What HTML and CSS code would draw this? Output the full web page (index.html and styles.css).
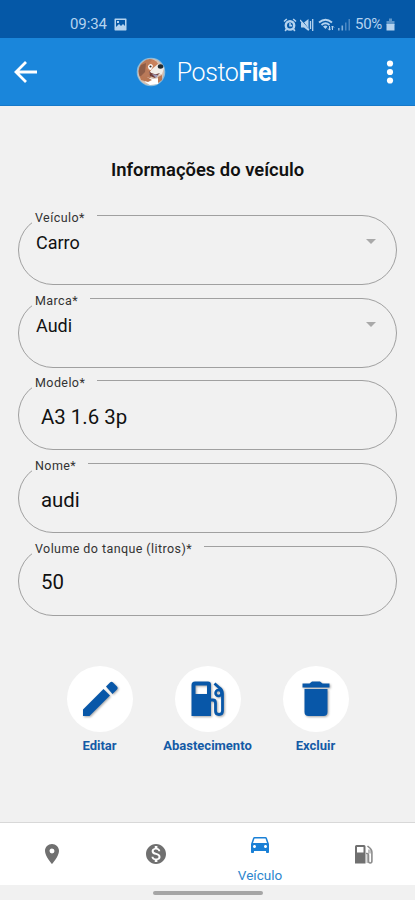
FILE: index.html
```html
<!DOCTYPE html>
<html lang="pt-BR">
<head>
    <meta charset="UTF-8">
    <meta name="viewport" content="width=device-width, initial-scale=1.0">
    <title>PostoFiel - Veículo</title>
    <link rel="stylesheet" href="styles.css">
</head>
<body>
    <div class="status-bar">
        <div class="status-left">
            <span class="clock">09:34</span>
            <svg width="13" height="13" viewBox="0 0 13 13">
                <path fill="currentColor" fill-rule="evenodd" d="M1 .5h11l.5.5v11l-.5.5H1L.5 12V1zM2 2v7l3-3 2 2 2-2 2 2V2zM3 3h2v2H3z"/>
            </svg>
        </div>
        <div class="status-right">
            <svg class="alarm" width="14" height="14" viewBox="0 0 14 14">
                <circle cx="7" cy="7.4" r="4.2" fill="none" stroke="currentColor" stroke-width="2.4"/>
                <path d="M7 5v2.6h2.2M1 3.5L3.8 1M13 3.5L10.2 1M3.5 11l-1.3 2M10.5 11l1.3 2" fill="none" stroke="currentColor" stroke-width="1.6"/>
            </svg>
            <svg class="mute" width="14" height="14" viewBox="0 0 14 14">
                <path d="M1 4.5h3L8.5 1v12L4 9.5H1z" fill="currentColor"/>
                <path d="M1 1l9 12" stroke="#0558a7" stroke-width="1"/>
                <path d="M0 2l9 10M10.5 3v8M12.7 1v12" fill="none" stroke="currentColor" stroke-width="1.3"/>
            </svg>
            <svg class="wifi" width="17" height="14" viewBox="0 0 17 14">
                <path d="M1 4.5Q7.500-1 14 4.500M3.500 7Q7.500 3.500 11.500 7" fill="none" stroke="currentColor" stroke-width="1.800"/>
                <path d="M5 8.500q2.500-2 4.500 0L7.500 11z" fill="currentColor"/>
                <path d="M11.500 8v4M10 10.500l1.500 1.700 1.500-1.700M14.500 12V8M13 9.500L14.500 8 16 9.500" fill="none" stroke="currentColor" stroke-width="1"/>
            </svg>
            <svg class="signal" width="13" height="13" viewBox="0 0 13 13">
                <path fill="currentColor" opacity=".7" d="M0 10h1.600v2.500H0zM3.500 7.500h1.600v5H3.500z"/>
                <path fill="currentColor" opacity=".4" d="M7 4.500h1.500v8H7zM10.500 1H12v11.500h-1.500z"/>
            </svg>
            <span class="battery-text">50%</span>
            <svg class="battery" width="9" height="13" viewBox="0 0 9 13">
                <path fill="currentColor" opacity=".5" d="M3 .5h3V3h2.500v4h-8V3H3z"/>
                <path fill="currentColor" d="M.5 6h8v6.500h-8z"/>
            </svg>
        </div>
    </div>

    <header class="app-bar">
        <svg class="back" width="24" height="24" viewBox="0 0 24 24">
            <path d="M12 2L2 12l10 10M2 12h21" fill="none" stroke="#fff" stroke-width="2.8"/>
        </svg>
        <div class="brand">
            <!-- Dog mascot -->
            <svg class="mascot" width="30" height="30" viewBox="0 0 30 30">
                <circle cx="15" cy="15" r="14.3" fill="#8ebbd8"/>
                <path d="M2 18C1 8 8 1 17 2c7 1 11 7 11 13s-5 13-13 13S3 23 2 18z" fill="#d7c0b1"/>
                <path d="M3 18Q1 9 7 5q5-5 11-2l5 7-7 6-3 9-8-3z" fill="#b97959"/>
                <path d="M16 3q5 0 7 6l-8 7-5-5z" fill="#c9825d"/>
                <path d="M5 8q-4 6-1 12l5-5 1-9z" fill="#8e5c47"/>
                <path d="M16 12l6-5 6 4-2 6-8 2-5-3z" fill="#f2eee9"/>
                <path d="M12 9q3-4 5 0l-2 4q-3 0-3-4z" fill="#fff"/>
                <circle cx="14.500" cy="9.500" r="1.100" fill="#38312f"/>
                <ellipse cx="24.500" cy="9.500" rx="2.700" ry="2.200" fill="#222b31"/>
                <path d="M13 14q4 5 11 2l-5 5-5-2z" fill="#713e39"/>
                <path d="M16 17l6 1-2 3z" fill="#9e9ab9"/>
                <path d="M10 20l7 2 7-1-2 6-8 1-5-3z" fill="#fff"/>
                <path d="M4 19l7 1 5 3-4 2-7-2zM22 20l4-2v5l-4 3z" fill="#b97754"/>
            </svg>
            <span class="brand-name">Posto<b>Fiel</b></span>
        </div>
        <svg class="more" width="8" height="24" viewBox="0 0 8 24">
            <g fill="#fff">
                <circle cx="4" cy="3.500" r="3.100"/>
                <circle cx="4" cy="12" r="3.100"/>
                <circle cx="4" cy="20.500" r="3.100"/>
            </g>
        </svg>
    </header>

    <main>
        <h1>Informações do veículo</h1>

        <div class="fields">
            <div class="field select">
                <span class="label">Veículo*</span>
                <span class="value">Carro</span>
                <span class="caret"></span>
            </div>
            <div class="field select">
                <span class="label">Marca*</span>
                <span class="value">Audi</span>
                <span class="caret"></span>
            </div>
            <div class="field">
                <span class="label">Modelo*</span>
                <span class="value">A3 1.6 3p</span>
            </div>
            <div class="field">
                <span class="label">Nome*</span>
                <span class="value">audi</span>
            </div>
            <div class="field">
                <span class="label">Volume do tanque (litros)*</span>
                <span class="value">50</span>
            </div>
        </div>

        <div class="actions">
            <div class="action">
                <div class="circle">
                    <svg width="36" height="36" viewBox="0 0 36 36">
                        <path d="M1 28.500L21.500 8l6.500 6.500L7.500 35H1zM24 5.500L28 1.500q1.500-1.300 3 0l4 4q1.300 1.500 0 3l-4.500 4.500z"/>
                    </svg>
                </div>
                <span>Editar</span>
            </div>
            <div class="action">
                <div class="circle">
                    <svg width="36" height="36" viewBox="0 0 36 36">
                        <path fill-rule="evenodd" d="M5 .5h13q3 0 3 3V35H1.500V4Q1.500.5 5 .5zM5.500 4.500V13h11.500V4.500z"/>
                        <path d="M21 19h2q2.500 0 2.500 3v8q0 3.500 3.500 3.500t3.500-3.500V13q0-4-3-6l-5-4.500" fill="none" stroke="#0857a8" stroke-width="2.800"/>
                        <circle cx="28.500" cy="12" r="3" fill="none" stroke="#0857a8" stroke-width="2.500"/>
                    </svg>
                </div>
                <span>Abastecimento</span>
            </div>
            <div class="action">
                <div class="circle">
                    <svg width="36" height="36" viewBox="0 0 36 36">
                        <path d="M4.500 2.500h7L14 .5h8l2.500 2h7v4h-27zM6.500 8h23v23q0 4-4 4h-15q-4 0-4-4z"/>
                    </svg>
                </div>
                <span>Excluir</span>
            </div>
        </div>
    </main>

    <nav class="tab-bar">
        <div class="tab">
            <svg width="24" height="24" viewBox="0 0 24 24">
                <path d="M12 2C8.130 2 5 5.130 5 9c0 5.250 7 13 7 13s7-7.750 7-13c0-3.870-3.130-7-7-7zm0 9.500a2.500 2.500 0 0 1 0-5 2.500 2.500 0 0 1 0 5z"/>
            </svg>
        </div>
        <div class="tab">
            <svg width="24" height="24" viewBox="0 0 24 24">
                <path d="M12 2C6.480 2 2 6.480 2 12s4.480 10 10 10 10-4.480 10-10S17.520 2 12 2zm1.410 16.090V20h-2.670v-1.930c-1.710-.36-3.160-1.460-3.270-3.400h1.960c.1 1.050.82 1.870 2.650 1.870 1.960 0 2.400-.98 2.400-1.590 0-.83-.44-1.610-2.670-2.140-2.480-.6-4.180-1.620-4.180-3.670 0-1.720 1.390-2.840 3.110-3.210V4h2.670v1.950c1.860.45 2.790 1.860 2.850 3.390H14.300c-.05-1.110-.64-1.870-2.220-1.870-1.500 0-2.400.68-2.400 1.640 0 .84.65 1.390 2.670 1.910s4.180 1.390 4.180 3.910c-.01 1.830-1.380 2.830-3.120 3.160z"/>
            </svg>
        </div>
        <div class="tab active">
            <svg width="24" height="24" viewBox="0 0 24 24">
                <path d="M18.920 5.010C18.720 4.420 18.160 4 17.500 4h-11c-.66 0-1.210.42-1.420 1.010L3 11v8c0 .55.450 1 1 1h1c.55 0 1-.45 1-1v-1h12v1c0 .55.450 1 1 1h1c.55 0 1-.45 1-1v-8l-2.080-5.990zM6.500 15c-.83 0-1.500-.67-1.500-1.500S5.670 12 6.500 12s1.500.670 1.500 1.500S7.330 15 6.500 15zm11 0c-.83 0-1.500-.67-1.500-1.500s.67-1.500 1.500-1.500 1.500.670 1.500 1.500-.67 1.500-1.500 1.500zM5 10l1.500-4.500h11L19 10H5z"/>
            </svg>
            <span>Veículo</span>
        </div>
        <div class="tab">
            <svg width="24" height="24" viewBox="0 0 24 24">
                <path fill-rule="evenodd" d="M4.500 3H12q1.500 0 1.500 1.500V21.500H3V4.500Q3 3 4.500 3zM5 5v5.500h6.500V5z"/>
                <path d="M14 11.500h1q1.500 0 1.500 2V19q0 2 1.700 2t1.700-2v-9q0-2-1.500-3.500L15.500 4" fill="none" stroke="#8c8c8c" stroke-width="1.600"/>
                <path d="M16 7.500h3v4h-3zM14.500 12.500h1.500V21h-1.500z" opacity=".45"/>
            </svg>
        </div>
    </nav>
    <div class="gesture-bar"><div class="handle"></div></div>
</body>
</html>
```

FILE: styles.css
```css
* {
    box-sizing: border-box;
}
body {
    margin: 0;
    height: 900px;
    display: flex;
    flex-direction: column;
    overflow: hidden;
    background-color: #f1f1f1;
    color: #111;
    font-family: Roboto, sans-serif;
}
svg {
    display: block;
    flex: none;
}

/* Status bar */
.status-bar {
    height: 38px;
    padding: 10px 20px 0 70px;
    display: flex;
    justify-content: space-between;
    background-color: #0558a7;
    color: #b5d3ef;
    font-size: 15px;
    line-height: 29px;
}
.status-left,
.status-right {
    height: 29px;
    display: flex;
    align-items: center;
}
.status-left {
    gap: 7px;
}
.clock {
    letter-spacing: -0.1px;
}
.alarm {
    margin-right: 3px;
}
.mute {
    margin-right: 4px;
}
.wifi {
    margin-right: 3px;
}
.signal {
    margin-right: 4px;
}
.battery-text {
    font-size: 15px;
    letter-spacing: -0.3px;
    margin-right: 4px;
}

/* App bar */
.app-bar {
    height: 68px;
    padding: 0 21px 0 14px;
    display: flex;
    align-items: center;
    justify-content: space-between;
    background-color: #1a86db;
    border-bottom: 1px solid #1679c9;
}
.brand {
    display: flex;
    align-items: center;
    gap: 11px;
    margin-left: -11px;
}
.brand-name {
    color: #fff;
    font-size: 25px;
    font-weight: 300;
    letter-spacing: -0.4px;
    line-height: 30px;
    padding-top: 2px;
}
.brand-name b {
    font-weight: 700;
}

/* Form */
main {
    flex: 1;
    padding: 0 18px;
}
h1 {
    margin: 53px 0 0;
    font-size: 18.4px;
    font-weight: 600;
    line-height: 22px;
    text-align: center;
}
.fields {
    display: grid;
    gap: 12.7px;
    margin-top: 34px;
}
.field {
    position: relative;
    height: 70px;
    padding: 0 20px 0 22px;
    display: flex;
    align-items: center;
    border: 1px solid #a0a0a0;
    border-radius: 35px;
}
.label {
    position: absolute;
    top: -6px;
    left: 13px;
    padding: 0 12px 0 3px;
    background-color: #f1f1f1;
    color: #333;
    font-size: 12.5px;
    line-height: 16px;
    letter-spacing: 0.42px;
}
.value {
    font-size: 20.4px;
    line-height: 24px;
    padding-top: 3px;
}
.select {
    align-items: flex-start;
    justify-content: space-between;
    padding: 16px 20px 0 17px;
}
.select .value {
    font-size: 18px;
    line-height: 22px;
    padding-top: 0;
}
.caret {
    margin-top: 7px;
    border: 5px solid transparent;
    border-top-color: #a9a9a9;
    border-bottom-width: 0;
}

/* Action buttons */
.actions {
    display: grid;
    grid-template-columns: repeat(3, 108px);
    justify-content: center;
    margin-top: 50px;
}
.action {
    display: flex;
    flex-direction: column;
    align-items: center;
    color: #145ba6;
    font-size: 13px;
    font-weight: 700;
    line-height: 16px;
}
.circle {
    width: 66px;
    height: 66px;
    margin-bottom: 6px;
    display: flex;
    align-items: center;
    justify-content: center;
    background-color: #fff;
    border-radius: 50%;
}
.circle svg {
    fill: #0857a8;
    filter: drop-shadow(1px 1px 1px rgba(0, 0, 0, 0.35));
}

/* Bottom tabs */
.tab-bar {
    height: 63px;
    display: grid;
    grid-template-columns: repeat(4, 104px);
    background-color: #fff;
    border-top: 1px solid #d8d8d8;
}
.tab {
    display: flex;
    flex-direction: column;
    align-items: center;
    justify-content: center;
}
.tab svg {
    fill: #707070;
}
.tab.active {
    justify-content: flex-start;
    padding-top: 10px;
    color: #2d86ce;
    font-size: 13.5px;
    line-height: 16px;
}
.tab.active svg {
    fill: #1a80d6;
    margin-bottom: 10px;
}
.gesture-bar {
    height: 15px;
    padding-top: 6px;
}
.handle {
    width: 110px;
    height: 4px;
    margin: 0 auto;
    background-color: #a6a6a6;
    border-radius: 2px;
}
```
